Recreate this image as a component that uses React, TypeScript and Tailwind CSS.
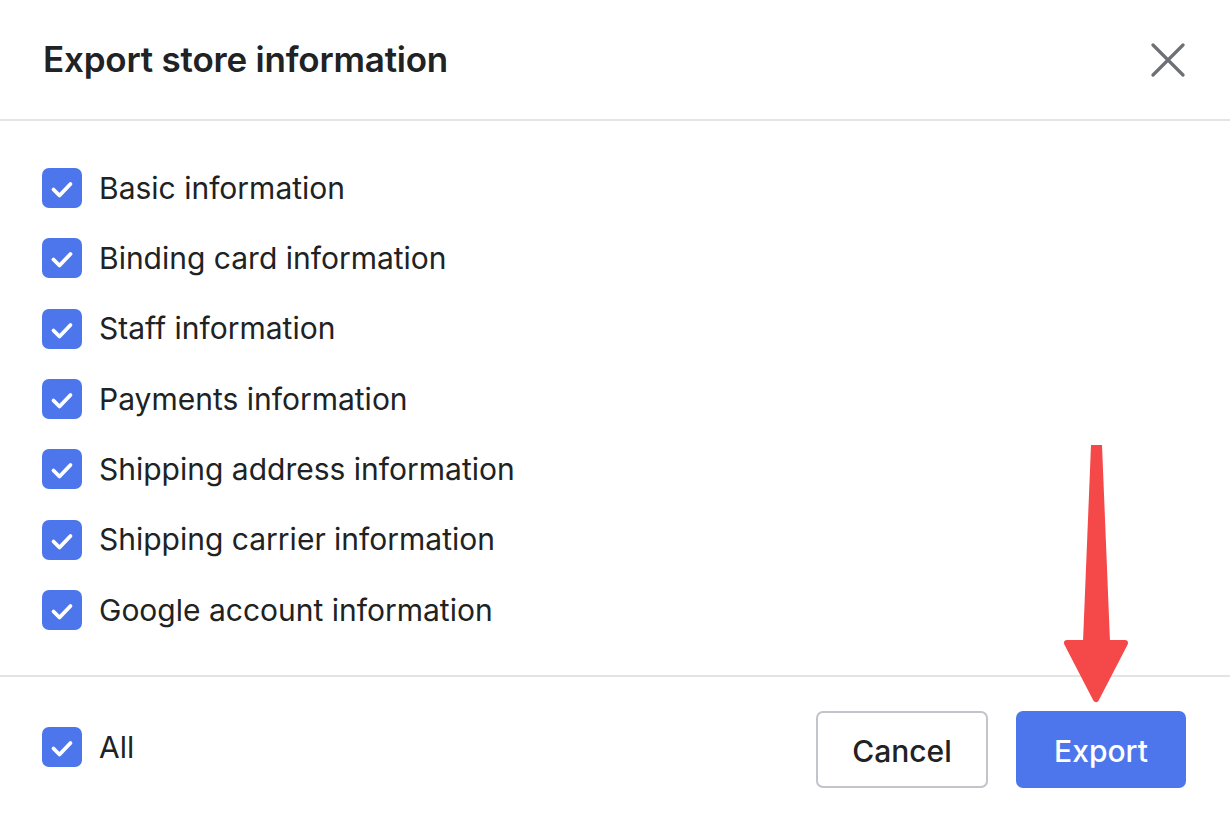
import React, { useState } from "react";

const items = [
  "Basic information",
  "Binding card information",
  "Staff information",
  "Payments information",
  "Shipping address information",
  "Shipping carrier information",
  "Google account information",
];

const CheckBox: React.FC<{ checked: boolean; onClick: () => void }> = ({ checked, onClick }) => (
  <button
    type="button"
    onClick={onClick}
    className={
      checked
        ? "w-10 h-10 shrink-0 rounded-[7px] bg-[#4e76ec] flex items-center justify-center"
        : "w-10 h-10 shrink-0 rounded-[7px] border-2 border-[#8c9196] bg-white"
    }
  >
    {checked && (
      <svg width="40" height="40" viewBox="0 0 40 40" fill="none">
        <path
          d="M11.5 21.5l6 6 11-11.5"
          stroke="white"
          strokeWidth="3.8"
          strokeLinecap="round"
          strokeLinejoin="round"
        />
      </svg>
    )}
  </button>
);

export default function App() {
  const [checked, setChecked] = useState<boolean[]>(items.map(() => true));
  const all = checked.every(Boolean);

  const toggle = (i: number) =>
    setChecked((c) => c.map((v, j) => (j === i ? !v : v)));

  return (
    <div className="relative w-[1230px] h-[824px] bg-white text-[#202223] font-['Inter',sans-serif] overflow-hidden">
      {/* header */}
      <div className="h-[121px] flex items-center justify-between pl-[43px] pr-[45px] border-b-2 border-[#e4e4e4]">
        <h1 className="text-[35px] font-semibold tracking-[-0.2px]">Export store information</h1>
        <button type="button" className="w-[34px] h-[34px]">
          <svg width="34" height="34" viewBox="0 0 34 34" fill="none">
            <path d="M2 2l30 30M32 2L2 32" stroke="#6d7175" strokeWidth="3.2" strokeLinecap="round" />
          </svg>
        </button>
      </div>

      {/* options */}
      <div className="flex flex-col pl-[42px] pt-[32px] pb-[30px] border-b-2 border-[#e4e4e4]">
        {items.map((label, i) => (
          <label key={label} className="h-[70.33px] flex items-center gap-[17px]">
            <CheckBox checked={checked[i]} onClick={() => toggle(i)} />
            <span className="text-[30px]">{label}</span>
          </label>
        ))}
      </div>

      {/* footer */}
      <div className="flex items-center justify-between pl-[42px] pr-[44px] pt-[34px]">
        <label className="flex items-center gap-[17px] -mt-[5px]">
          <CheckBox checked={all} onClick={() => setChecked(items.map(() => !all))} />
          <span className="text-[30px]">All</span>
        </label>
        <div className="flex items-center gap-[28px]">
          <button
            type="button"
            className="w-[172px] h-[77px] pt-[3px] rounded-[7px] border-2 border-[#c1c4c8] bg-white text-[30px] font-medium"
          >
            Cancel
          </button>
          <button
            type="button"
            className="w-[170px] h-[77px] pt-[3px] rounded-[7px] bg-[#4e76ec] text-white text-[30px] font-medium"
          >
            Export
          </button>
        </div>
      </div>

      {/* annotation arrow */}
      <svg className="absolute left-0 top-0 pointer-events-none" width="1230" height="824" viewBox="0 0 1230 824">
        <polygon points="1091,445 1102,445 1110,642 1083,642" fill="#f54949" />
        <polygon
          points="1067,643 1125,643 1096,699"
          fill="#f54949"
          stroke="#f54949"
          strokeWidth="6"
          strokeLinejoin="round"
        />
      </svg>
    </div>
  );
}
